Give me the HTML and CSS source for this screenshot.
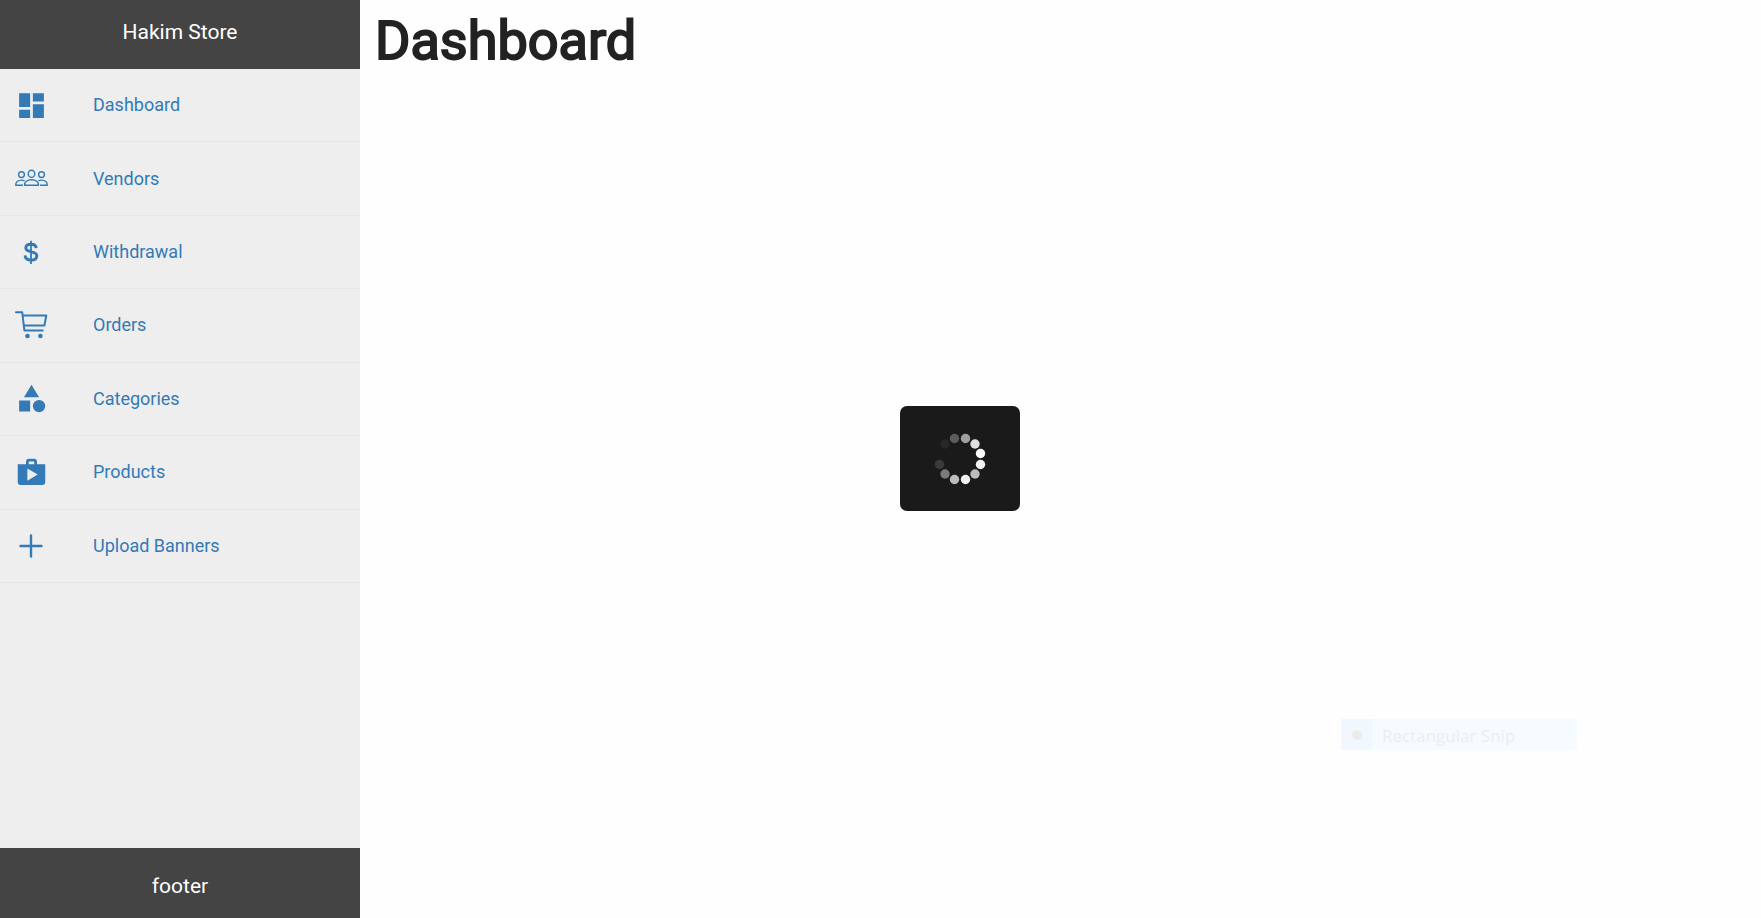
FILE: index.html
```html
<!DOCTYPE html>
<html lang="en">
<head>
<meta charset="utf-8">
<meta name="viewport" content="width=device-width, initial-scale=1">
<title>Hakim Store</title>
<link rel="stylesheet" href="styles.css">
</head>
<body>
<div class="layout">
  <aside class="sidebar">
    <header class="sidebar-header">Hakim Store</header>
    <nav class="sidebar-nav">
      <ul class="menu">
        <li class="menu-item"><a class="menu-link" href="#dashboard">
          <svg class="icon" viewBox="0 0 24 24" aria-hidden="true"><path d="M3 13h8V3H3v10zm0 8h8v-6H3v6zm10 0h8V11h-8v10zm0-18v6h8V3h-8z"/></svg>
          <span>Dashboard</span></a></li>
        <li class="menu-item"><a class="menu-link" href="#vendors">
          <svg class="icon line" viewBox="0 0 33 33" aria-hidden="true"><ellipse cx="16.5" cy="11.800" rx="3.300" ry="3.600"/><circle cx="6.500" cy="12.600" r="2.900"/><circle cx="26.500" cy="12.600" r="2.900"/><path d="M9.600 23.200h13.800c.4-3.200-2.700-5.400-6.900-5.400s-7.300 2.200-6.900 5.400zM8 23.200H.8c-.4-3.200 2.200-5.100 5.700-5.100 1.200 0 2.200.2 3.100.7M25 23.200h7.200c.4-3.200-2.200-5.100-5.700-5.100-1.200 0-2.200.2-3.100.7"/></svg>
          <span>Vendors</span></a></li>
        <li class="menu-item"><a class="menu-link" href="#withdrawal">
          <svg class="icon line dollar" viewBox="0 0 33 33" aria-hidden="true"><path d="M21.200 12.200c-.2-2.500-2.200-3.900-5.200-3.900-3.200 0-5.200 1.600-5.200 3.800 0 5.200 11 2.200 11 7.600 0 2.700-2.200 4.400-5.700 4.400-3.700 0-5.900-1.800-6-4.700"/><path class="dollar-bar" d="M16 4.800v23.200"/></svg>
          <span>Withdrawal</span></a></li>
        <li class="menu-item"><a class="menu-link" href="#orders">
          <svg class="icon line cart" viewBox="0 0 33 33" aria-hidden="true"><path d="M1 3.200h6.200l2.200 18.300h18.400M8 6.400h23.300l-1.900 10.200H9.100"/><circle class="wheel" cx="12.500" cy="27" r="2.300"/><circle class="wheel" cx="25.400" cy="27" r="2.300"/></svg>
          <span>Orders</span></a></li>
        <li class="menu-item"><a class="menu-link" href="#categories">
          <svg class="icon" viewBox="0 0 24 24" aria-hidden="true"><path d="M12 2l-5.500 9h11L12 2zM3 13.500h8v8H3z"/><circle cx="17.500" cy="17.500" r="4.500"/></svg>
          <span>Categories</span></a></li>
        <li class="menu-item"><a class="menu-link" href="#products">
          <svg class="icon" viewBox="0 0 24 24" aria-hidden="true"><path d="M16 6V4c0-1.110-.89-2-2-2h-4c-1.110 0-2 .89-2 2v2H2v13c0 1.110.89 2 2 2h16c1.110 0 2-.89 2-2V6h-6zm-6-2h4v2h-4V4zM9 18V9l7.500 4.500L9 18z"/></svg>
          <span>Products</span></a></li>
        <li class="menu-item"><a class="menu-link" href="#banners">
          <svg class="icon line plus" viewBox="0 0 33 33" aria-hidden="true"><path d="M16 6.500v21M5.500 17h21"/></svg>
          <span>Upload Banners</span></a></li>
      </ul>
    </nav>
    <footer class="sidebar-footer">footer</footer>
  </aside>
  <main class="content">
    <h1 class="page-title">Dashboard</h1>
  </main>
</div>
<div class="overlay">
  <div class="loader" role="status" aria-label="Loading">
    <svg class="spinner" viewBox="-26 -26 52 52" aria-hidden="true">
      <circle cx="5.500" cy="-20.500" r="4.700" fill="#a0a0a0"/>
      <circle cx="15" cy="-15" r="4.700" fill="#dfdfdf"/>
      <circle cx="20.500" cy="-5.500" r="4.700" fill="#ffffff"/>
      <circle cx="20.500" cy="5.500" r="4.700" fill="#f0f0f0"/>
      <circle cx="15" cy="15" r="4.700" fill="#bcbcbc"/>
      <circle cx="5.500" cy="20.500" r="4.700" fill="#f0f0f0"/>
      <circle cx="-5.500" cy="20.500" r="4.700" fill="#bcbcbc"/>
      <circle cx="-15" cy="15" r="4.700" fill="#7b7b7b"/>
      <circle cx="-20.500" cy="5.500" r="4.700" fill="#3a3a3a"/>
      <circle cx="-15" cy="-15" r="4.700" fill="#282828"/>
      <circle cx="-5.500" cy="-20.500" r="4.700" fill="#5b5b5b"/>
    </svg>
  </div>
</div>
<div class="snip"><span class="snip-mark"><span class="snip-dot"></span></span><span class="snip-label">Rectangular Snip</span></div>
</body>
</html>
```
FILE: styles.css
```css
* { box-sizing: border-box; }

body {
  margin: 0;
  background: #fefefe;
  color: #222;
  font-family: Roboto, "Liberation Sans", sans-serif;
}

.layout {
  display: flex;
  min-height: 100vh;
}

.sidebar {
  display: flex;
  flex-direction: column;
  flex: 0 0 360px;
  background: #eee;
}

.sidebar-header,
.sidebar-footer {
  background: #444;
  color: #fff;
  font-size: 21px;
  line-height: 24px;
  text-align: center;
}

.sidebar-header { padding: 20px 16px 25px; }
.sidebar-footer { padding: 26px 16px 20px; }

.sidebar-nav { flex: 1; }

.menu {
  display: grid;
  grid-template-rows: repeat(7, 1fr);
  min-height: 514px;
  margin: 0;
  padding: 0;
  list-style: none;
}

.menu-item {
  display: flex;
  border-bottom: 1px solid #e5e5e5;
}

.menu-link {
  display: flex;
  flex: 1;
  align-items: center;
  gap: 45px;
  padding: 0 15px;
  color: #337ab7;
  font-size: 18px;
  line-height: 24px;
  text-decoration: none;
}

.icon {
  flex: none;
  width: 33px;
  height: 33px;
  fill: currentColor;
}

.line {
  fill: none;
  stroke: currentColor;
  stroke-width: 1.4;
  overflow: visible;
}

.dollar { stroke-width: 2.9; }

.dollar-bar { stroke-width: 1.8; }

.cart {
  stroke-width: 2;
  stroke-linecap: round;
  stroke-linejoin: round;
}

.wheel {
  fill: currentColor;
  stroke: none;
}

.plus {
  stroke-width: 2.4;
  stroke-linecap: round;
}

.content {
  flex: 1;
  padding: 9px 15px;
}

.page-title {
  margin: 0;
  font-size: 54px;
  font-weight: 400;
  line-height: 64px;
  -webkit-text-stroke: 2px currentColor;
}

.overlay {
  position: fixed;
  inset: 0 0 1px 159px;
  display: grid;
  place-items: center;
  pointer-events: none;
}

.loader {
  display: grid;
  place-items: center;
  width: 120px;
  height: 105px;
  border-radius: 7px;
  background: #1a1a1a;
}

.spinner {
  width: 52px;
  height: 52px;
}

.snip {
  position: fixed;
  right: 184px;
  bottom: 168px;
  display: flex;
  width: 236px;
  height: 31px;
  background: #f6fbff;
  color: #ededed;
  font-family: "Open Sans", "Noto Sans", sans-serif;
  font-size: 17px;
  line-height: 34px;
}

.snip-mark {
  display: grid;
  place-items: center;
  width: 31px;
  background: #f0f7ff;
}

.snip-dot {
  width: 10px;
  height: 10px;
  border-radius: 50%;
  background: #ebebeb;
}

.snip-label { padding-left: 10px; }
```
